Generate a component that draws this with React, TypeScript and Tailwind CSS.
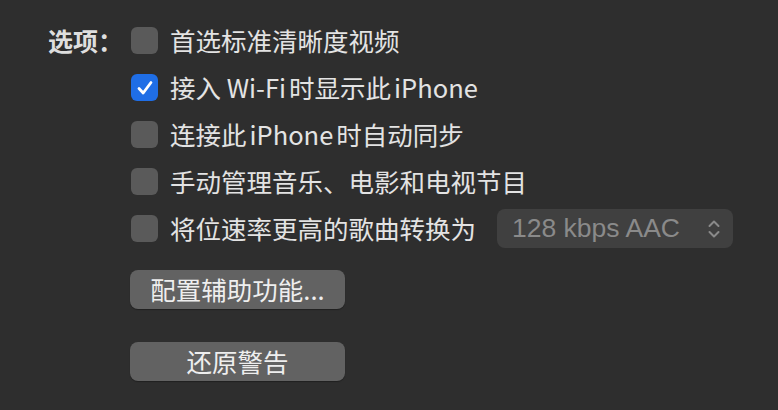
import { ReactNode } from 'react';

const font = { fontFamily: '"PingFang SC", "Noto Sans CJK SC", "Noto Sans", sans-serif' };

interface RowProps {
  checked?: boolean;
  children: ReactNode;
}

function Checkbox({ checked }: { checked?: boolean }) {
  if (checked) {
    return (
      <div className="w-[27px] h-[27px] rounded-[6px] bg-[#1f6ee6] flex items-center justify-center shrink-0">
        <svg viewBox="0 0 20 20" className="w-[20px] h-[20px]">
          <path d="M4 10.5 L8.2 15 L16 4.5" fill="none" stroke="white" strokeWidth="2.8" strokeLinecap="round" strokeLinejoin="round" />
        </svg>
      </div>
    );
  }
  return <div className="w-[27px] h-[27px] rounded-[6px] bg-[#5a5a5a] shrink-0" />;
}

function Row({ checked, children }: RowProps) {
  return (
    <div className="h-[47px] flex items-center gap-[12px]">
      <Checkbox checked={checked} />
      {children}
    </div>
  );
}

export default function App() {
  return (
    <div className="w-[778px] h-[410px] bg-[#2e2e2e] text-[#e3e3e3] overflow-hidden" style={font}>
      <div className="flex pl-[48px] pt-[17px]">
        <div className="w-[83px] h-[47px] flex items-center text-[25px] font-bold text-[#dedede]">选项：</div>
        <div className="flex flex-col">
          <Row>
            <span className="text-[25.5px]">首选标准清晰度视频</span>
          </Row>
          <Row checked>
            <span className="text-[25.5px]">
              接入 Wi-Fi<span className="ml-[3px]">时显示此</span><span className="ml-[3px]">iPhone</span>
            </span>
          </Row>
          <Row>
            <span className="text-[25.5px]">
              连接此<span className="ml-[3px]">iPhone</span><span className="ml-[3px]">时自动同步</span>
            </span>
          </Row>
          <Row>
            <span className="text-[25.5px]">手动管理音乐、电影和电视节目</span>
          </Row>
          <Row>
            <span className="text-[25.5px]">将位速率更高的歌曲转换为</span>
            <div className="ml-[9px] w-[236px] h-[39px] rounded-[8px] bg-[#404040] flex items-center justify-between pl-[15px] pr-[12px]">
              <span className="text-[26.5px] text-[#8a8a8a]" style={{ fontFamily: '"Helvetica Neue", "Liberation Sans", Arial, sans-serif' }}>128 kbps AAC</span>
              <svg viewBox="0 0 14 20" className="w-[14px] h-[20px]">
                <path d="M2.5 7 L7 2.5 L11.5 7 M2.5 13 L7 17.5 L11.5 13" fill="none" stroke="#8a8a8a" strokeWidth="2" strokeLinecap="round" strokeLinejoin="round" />
              </svg>
            </div>
          </Row>
          <button className="mt-[18px] -ml-[1px] w-[215px] h-[39px] rounded-[8px] bg-[#626262] text-[25.5px] text-[#eeeeee] flex items-center justify-center shadow-[0_1px_1px_rgba(0,0,0,0.3)]">
            配置辅助功能...
          </button>
          <button className="mt-[33px] -ml-[1px] w-[215px] h-[39px] rounded-[8px] bg-[#626262] text-[25.5px] text-[#eeeeee] flex items-center justify-center shadow-[0_1px_1px_rgba(0,0,0,0.3)]">
            还原警告
          </button>
        </div>
      </div>
    </div>
  );
}
